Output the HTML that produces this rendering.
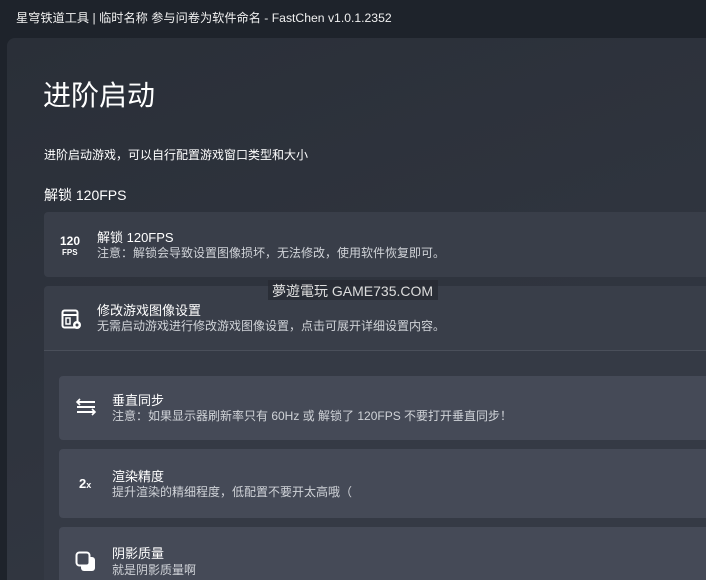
<!DOCTYPE html>
<html><head><meta charset="utf-8"><style>
*{margin:0;padding:0;box-sizing:border-box}
html,body{width:706px;height:580px;overflow:hidden}
body{background:#1e232b;font-family:"Liberation Sans","Noto Sans CJK SC",sans-serif;color:#fff;position:relative}
.title{position:absolute;left:16px;top:8px;font-size:12.2px;color:#f0f0f0}
.panel{position:absolute;left:7px;top:38px;width:699px;height:542px;background:linear-gradient(160deg,#2a2f38,#343944);border-radius:8px 0 0 0}
.abs{position:absolute}
.card{position:absolute;background:#393e49;border-radius:4px}
.t{position:absolute;font-size:13px;color:#fff}
.s{position:absolute;font-size:12px;color:#d0d3d8}
.inner{position:absolute;left:59px;width:647px;background:#454a57;border-radius:4px 0 0 4px}
</style></head><body>
<div class="title">星穹铁道工具 | 临时名称 参与问卷为软件命名 - FastChen v1.0.1.2352</div>
<div class="panel"></div>
<div class="abs" style="left:43px;top:74px;font-size:28px">进阶启动</div>
<div class="abs" style="left:44px;top:146px;font-size:12px">进阶启动游戏，可以自行配置游戏窗口类型和大小</div>
<div class="abs" style="left:44px;top:185px;font-size:14px">解锁 120FPS</div>

<div class="card" style="left:44px;top:212px;width:662px;height:65px;border-radius:4px 0 0 4px"></div>
<div class="abs" style="left:60px;top:235px;font-size:12px;font-weight:bold;line-height:12px">120</div>
<div class="abs" style="left:62px;top:248px;font-size:8px;font-weight:bold">FPS</div>
<div class="t" style="left:97px;top:227px">解锁 120FPS</div>
<div class="s" style="left:97px;top:244px">注意：解锁会导致设置图像损坏，无法修改，使用软件恢复即可。</div>

<div class="card" style="left:44px;top:286px;width:662px;height:294px;background:#353a45;border-radius:4px 0 0 0"></div>
<div class="card" style="left:44px;top:286px;width:662px;height:64px;border-radius:4px 0 0 0"></div>
<div class="abs" style="left:44px;top:350px;width:662px;height:1px;background:#4a4f5a"></div>
<svg class="abs" style="left:61px;top:309px" width="22" height="22" viewBox="0 0 22 22"><rect x="1.5" y="1.5" width="15" height="17" rx="2" fill="none" stroke="#fff" stroke-width="2"/><line x1="2" y1="6" x2="16" y2="6" stroke="#fff" stroke-width="2"/><rect x="5" y="9" width="4" height="6" fill="none" stroke="#fff" stroke-width="1.5"/><circle cx="16" cy="16" r="4" fill="#fff"/><circle cx="16" cy="16" r="1.5" fill="#393e49"/></svg>
<div class="t" style="left:97px;top:300px">修改游戏图像设置</div>
<div class="s" style="left:97px;top:317px">无需启动游戏进行修改游戏图像设置，点击可展开详细设置内容。</div>

<div class="inner" style="top:376px;height:64px"></div>
<svg class="abs" style="left:75px;top:398px" width="22" height="18" viewBox="0 0 22 18"><line x1="2" y1="4" x2="20" y2="4" stroke="#fff" stroke-width="2"/><path d="M5 1L2 4L5 7" fill="none" stroke="#fff" stroke-width="1.6"/><line x1="2" y1="9" x2="20" y2="9" stroke="#fff" stroke-width="2"/><line x1="2" y1="14" x2="20" y2="14" stroke="#fff" stroke-width="2"/><path d="M17 11L20 14L17 17" fill="none" stroke="#fff" stroke-width="1.6"/></svg>
<div class="t" style="left:112px;top:390px">垂直同步</div>
<div class="s" style="left:112px;top:407px">注意：如果显示器刷新率只有 60Hz 或 解锁了 120FPS 不要打开垂直同步！</div>

<div class="inner" style="top:449px;height:69px"></div>
<div class="abs" style="left:79px;top:476px;font-size:13px;font-weight:bold">2<span style="font-size:9px">x</span></div>
<div class="t" style="left:112px;top:466px">渲染精度</div>
<div class="s" style="left:112px;top:483px">提升渲染的精细程度，低配置不要开太高哦（</div>

<div class="inner" style="top:527px;height:53px;border-radius:4px 0 0 0"></div>
<svg class="abs" style="left:75px;top:551px" width="22" height="22" viewBox="0 0 22 22"><rect x="6" y="6" width="14" height="14" rx="3" fill="#fff"/><rect x="1.5" y="1.5" width="13" height="13" rx="3" fill="#454a57" stroke="#fff" stroke-width="2"/></svg>
<div class="t" style="left:112px;top:543px">阴影质量</div>
<div class="s" style="left:112px;top:561px">就是阴影质量啊</div>

<div class="abs" style="left:268px;top:280px;width:170px;height:20px;background:rgba(40,44,52,.85);font-size:14px;color:#ddd;padding:1px 4px">夢遊電玩 GAME735.COM</div>
</body></html>
